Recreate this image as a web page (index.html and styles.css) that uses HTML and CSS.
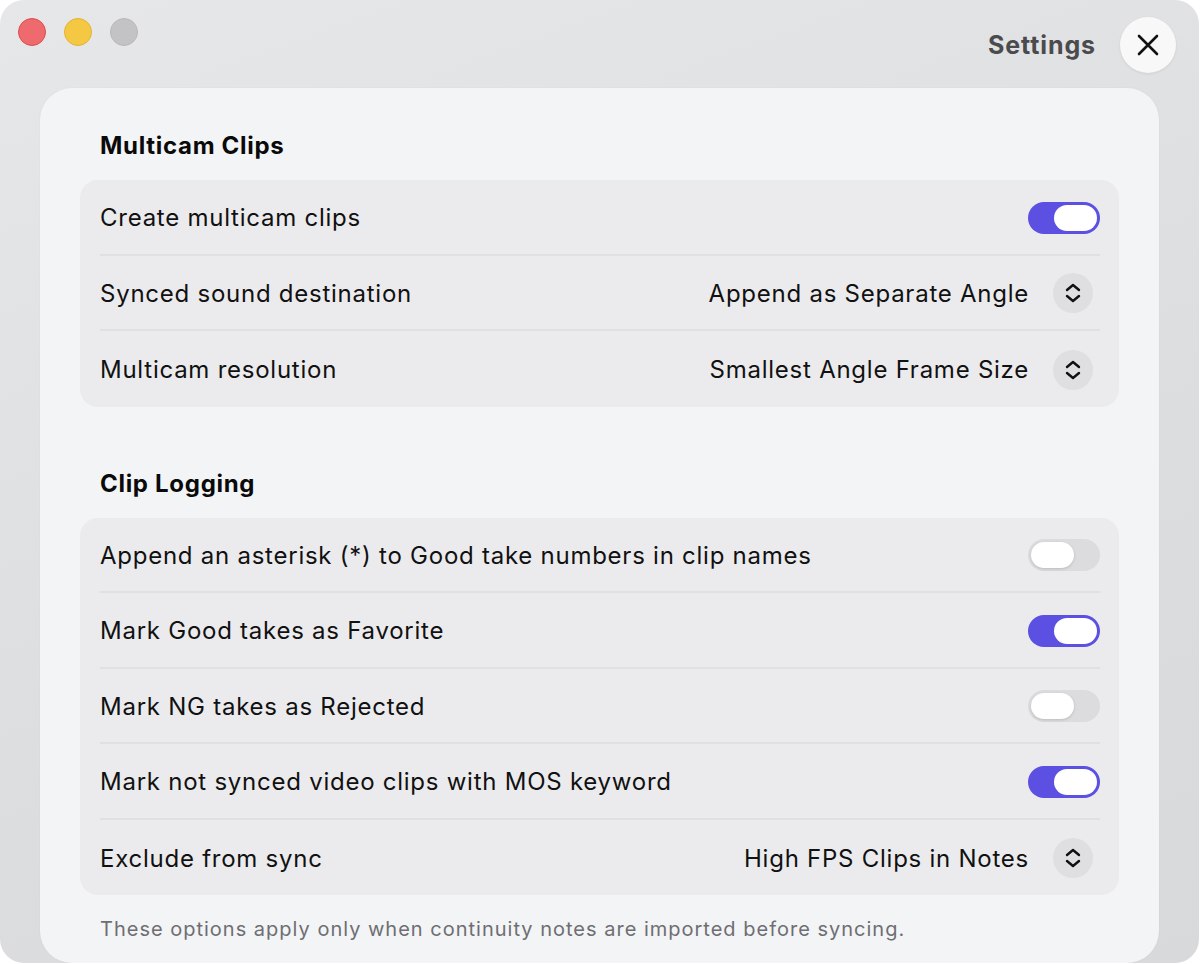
FILE: index.html
```html
<!DOCTYPE html>
<html lang="en">
<head>
    <meta charset="UTF-8">
    <meta name="viewport" content="width=device-width, initial-scale=1.0">
    <title>Settings</title>
    <link rel="stylesheet" href="styles.css">
</head>
<body>
<div class="window">
    <header class="titlebar">
        <div class="lights">
            <span class="light red"></span>
            <span class="light yellow"></span>
            <span class="light gray"></span>
        </div>
        <div class="title">Settings</div>
        <button class="close-button" aria-label="Close">
            <svg width="24" height="24" viewBox="0 0 24 24"><path d="M3 3 L21 21 M21 3 L3 21" stroke="#111" stroke-width="2.6" stroke-linecap="round"/></svg>
        </button>
    </header>

    <main class="panel">
        <h2 class="section-title">Multicam Clips</h2>
        <div class="group">
            <div class="row">
                <span class="label">Create multicam clips</span>
                <span class="toggle on"><span class="knob"></span></span>
            </div>
            <div class="row">
                <span class="label">Synced sound destination</span>
                <span class="picker">Append as Separate Angle
                    <span class="stepper"><svg width="18" height="22" viewBox="0 0 18 22"><path d="M3 8 L9 3 L15 8 M3 14 L9 19 L15 14" fill="none" stroke="#111" stroke-width="2.4" stroke-linecap="round" stroke-linejoin="round"/></svg></span>
                </span>
            </div>
            <div class="row">
                <span class="label">Multicam resolution</span>
                <span class="picker">Smallest Angle Frame Size
                    <span class="stepper"><svg width="18" height="22" viewBox="0 0 18 22"><path d="M3 8 L9 3 L15 8 M3 14 L9 19 L15 14" fill="none" stroke="#111" stroke-width="2.4" stroke-linecap="round" stroke-linejoin="round"/></svg></span>
                </span>
            </div>
        </div>

        <h2 class="section-title second">Clip Logging</h2>
        <div class="group">
            <div class="row">
                <span class="label">Append an asterisk (*) to Good take numbers in clip names</span>
                <span class="toggle"><span class="knob"></span></span>
            </div>
            <div class="row">
                <span class="label">Mark Good takes as Favorite</span>
                <span class="toggle on"><span class="knob"></span></span>
            </div>
            <div class="row">
                <span class="label">Mark NG takes as Rejected</span>
                <span class="toggle"><span class="knob"></span></span>
            </div>
            <div class="row">
                <span class="label">Mark not synced video clips with MOS keyword</span>
                <span class="toggle on"><span class="knob"></span></span>
            </div>
            <div class="row">
                <span class="label">Exclude from sync</span>
                <span class="picker">High FPS Clips in Notes
                    <span class="stepper"><svg width="18" height="22" viewBox="0 0 18 22"><path d="M3 8 L9 3 L15 8 M3 14 L9 19 L15 14" fill="none" stroke="#111" stroke-width="2.4" stroke-linecap="round" stroke-linejoin="round"/></svg></span>
                </span>
            </div>
        </div>
        <p class="note">These options apply only when continuity notes are imported before syncing.</p>
    </main>
</div>
</body>
</html>
```
FILE: styles.css
```css
body {
    margin: 0;
    background: #ffffff;
    font-family: Inter, "Noto Sans", sans-serif;
    color: #111;
}

.window {
    width: 1199px;
    height: 963px;
    border-radius: 24px;
    background: linear-gradient(160deg, #e6e7e9 0%, #dcdddf 60%, #d8d9db 100%);
    box-sizing: border-box;
    padding: 0 40px 0 40px;
    display: flex;
    flex-direction: column;
    overflow: hidden;
}

.titlebar {
    height: 88px;
    display: flex;
    align-items: flex-start;
    margin: 0 -40px 0 -40px;
    padding: 0 23px 0 18px;
}

.lights {
    display: flex;
    gap: 18px;
    margin-top: 18px;
}

.light {
    width: 28px;
    height: 28px;
    border-radius: 50%;
    box-sizing: border-box;
}

.light.red { background: #ee6a6c; border: 1px solid #de4c4e; }
.light.yellow { background: #f5c843; border: 1px solid #e3b22d; }
.light.gray { background: #c3c3c5; border: 1px solid #b8b8ba; }

.title {
    margin-left: auto;
    margin-top: 30px;
    font-size: 25px;
    font-weight: 700;
    letter-spacing: 0.9px;
    color: #4b4b4d;
}

.close-button {
    width: 56px;
    height: 56px;
    margin: 17px 0 0 24px;
    border: none;
    border-radius: 50%;
    background: #f8f8f9;
    box-shadow: 0 1px 3px rgba(0,0,0,0.08);
    display: flex;
    align-items: center;
    justify-content: center;
    padding: 0;
}

.panel {
    flex: 1;
    background: #f3f4f6;
    border-radius: 32px;
    padding: 40px 40px 0 40px;
    box-shadow: 0 0 2px rgba(0,0,0,0.05);
}

.section-title {
    margin: 0 0 16px 20px;
    font-size: 24px;
    font-weight: 700;
    line-height: 36px;
    letter-spacing: 0.7px;
    color: #0a0a0a;
}

.section-title.second {
    margin-top: 59px;
}

.group {
    background: #ebebed;
    border-radius: 18px;
    padding: 0 19px 0 20px;
}

.row {
    height: 75.5px;
    padding-top: 2px;
    display: flex;
    align-items: center;
    justify-content: space-between;
    border-bottom: 2px solid #e0e0e2;
    box-sizing: border-box;
}

.row:last-child {
    border-bottom: none;
}

.label {
    font-size: 24px;
    letter-spacing: 0.75px;
    color: #111;
}

.picker {
    display: flex;
    align-items: center;
    font-size: 24px;
    letter-spacing: 0.75px;
    color: #111;
}

.stepper {
    width: 40px;
    height: 40px;
    border-radius: 50%;
    background: #dfdfe1;
    margin-left: 24px;
    margin-right: 7px;
    display: flex;
    align-items: center;
    justify-content: center;
}

.toggle {
    width: 72px;
    height: 32px;
    border-radius: 16px;
    background: #dcdcde;
    position: relative;
    box-sizing: border-box;
}

.toggle .knob {
    position: absolute;
    top: 3px;
    left: 3px;
    width: 43px;
    height: 26px;
    border-radius: 13px;
    background: #ffffff;
    box-shadow: 0 1px 3px rgba(0,0,0,0.15);
}

.toggle.on {
    background: #5b50e2;
}

.toggle.on .knob {
    left: 26px;
    box-shadow: none;
}

.note {
    margin: 22px 0 0 20px;
    font-size: 20px;
    letter-spacing: 1px;
    color: #6e6e73;
}
```
